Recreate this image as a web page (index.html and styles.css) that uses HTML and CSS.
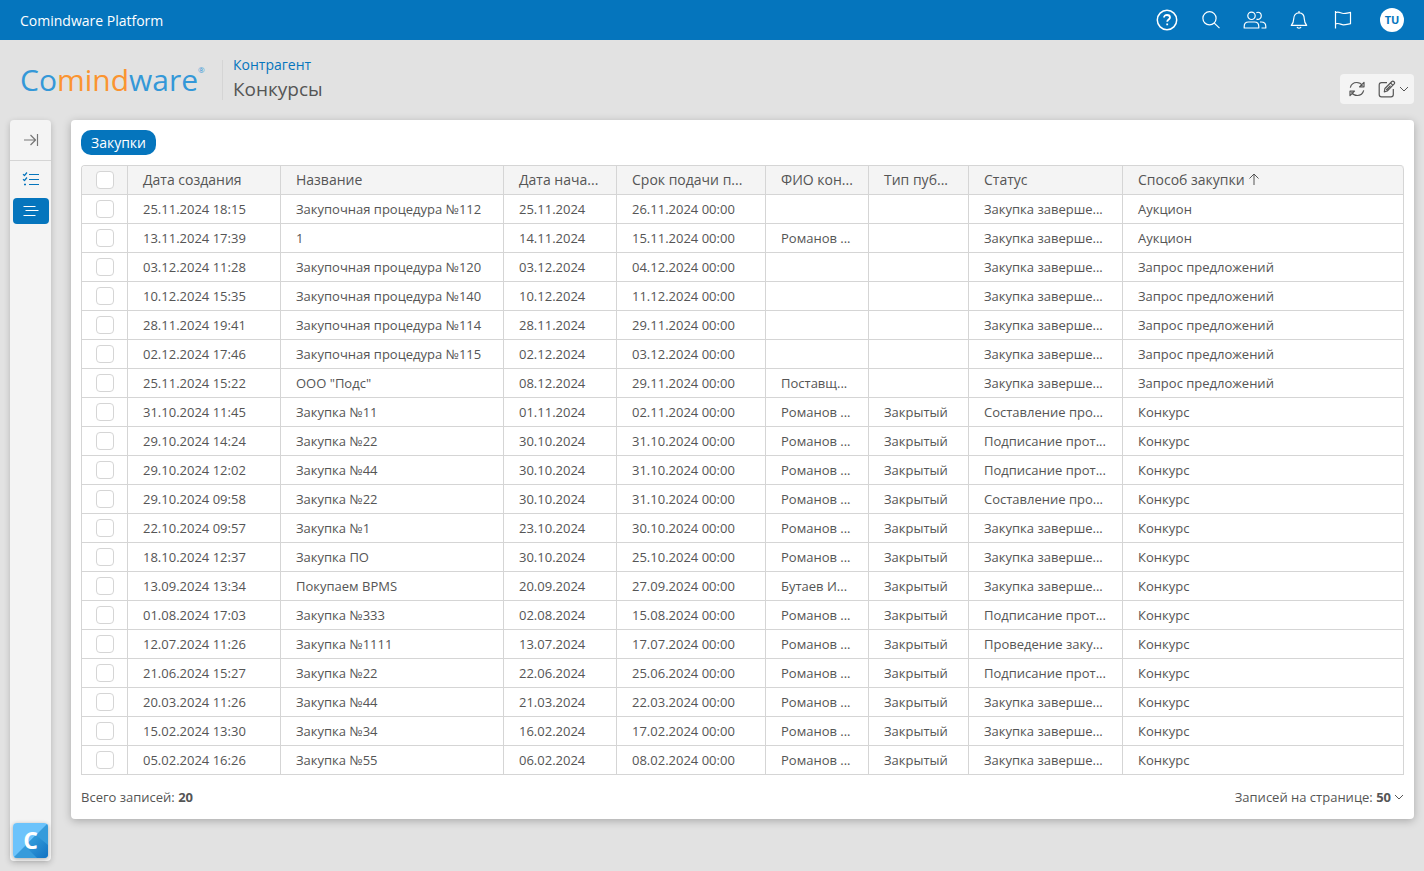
FILE: index.html
```html
<!DOCTYPE html>
<html lang="ru">
<head>
<meta charset="utf-8">
<title>Конкурсы — Comindware Platform</title>
<link rel="stylesheet" href="styles.css">
</head>
<body>
<header class="topbar">
  <span class="product">Comindware Platform</span>
  <nav class="tools">
    <button class="tool" type="button" aria-label="Справка"><svg width="22" height="22" viewBox="0 0 22 22"><circle cx="11" cy="11" r="9.7" stroke-width="1.5"/><path stroke-width="1.8" d="M8 8.6C8 6.9 9.3 6 11 6s3 .9 3 2.500c0 2-2.800 2.100-2.800 4.300M11.200 14.400v1.800"/></svg></button>
    <button class="tool" type="button" aria-label="Поиск"><svg width="22" height="22" viewBox="0 0 22 22"><circle cx="9.500" cy="9.300" r="6.600"/><path d="m14.300 14.100 5.200 5"/></svg></button>
    <button class="tool" type="button" aria-label="Пользователи"><svg width="24" height="22" viewBox="0 0 24 22"><circle cx="8.500" cy="6.800" r="3.700"/><path d="M1.200 19v-1.500c0-3 1.800-4.500 4.300-4.500h6c2.500 0 4.300 1.500 4.300 4.500V19zM13.300 3.700c2.800-1.300 5 .6 5 3.100s-2.200 4.300-4.800 3.300M17 13h1.200c2.700 0 4.600 1.500 4.600 4.500V19h-4.300"/></svg></button>
    <button class="tool" type="button" aria-label="Уведомления"><svg width="22" height="22" viewBox="0 0 22 22"><path d="M11 2v1.700M3.300 16.400c1.700-2 2.400-3.300 2.400-6.300 0-3.800 2-6.200 5.300-6.200s5.300 2.400 5.300 6.200c0 3 .7 4.300 2.400 6.300zM9 17.800c.5 1.800 3.500 1.800 4 0"/></svg></button>
    <button class="tool" type="button" aria-label="Задачи"><svg width="22" height="22" viewBox="0 0 22 22"><path d="M3.500 2v17.500M3.500 3.600c4-1.400 5 .9 8 .9 2.400 0 4.300-.6 7-1.100v11.300c-2.700.5-4.600 1.100-7 1.100-3 0-4-2.300-8-.9"/></svg></button>
    <button class="avatar" type="button">TU</button>
  </nav>
</header>

<section class="pagehead">
  <a class="logo" href="#" aria-label="Comindware"><span>Co</span><span class="logo-mid">mind</span><span>ware</span><sup>®</sup></a>
  <div class="titles">
    <a class="crumb" href="#">Контрагент</a>
    <h1 class="title">Конкурсы</h1>
  </div>
  <div class="actions">
    <button class="action" type="button" aria-label="Обновить"><svg width="18" height="18" viewBox="0 0 18 18"><path d="M2.300 7.600C3.200 4.300 5.600 2.500 8.700 2.500c2.500 0 4.500 1.100 5.900 3.200M16 2.300v4.500h-4.500zM15.700 10.400c-.9 3.300-3.300 5.100-6.400 5.100-2.500 0-4.500-1.100-5.900-3.200M2 15.700v-4.500h4.500z"/></svg></button>
    <button class="action edit" type="button" aria-label="Изменить"><svg width="18" height="18" viewBox="0 0 18 18"><path d="M9 2.700H3.500Q1.200 2.700 1.200 5v9.500q0 2.300 2.300 2.300h9.500q2.300 0 2.300-2.300V9M6.300 11.800l.6-3.300 7-7q1-.8 2.100.2t.2 2.200l-7 7.100zM12.500 2.900l2.500 2.500M8.200 10l4.300-4.300"/></svg><svg class="chevron" width="10" height="8" viewBox="0 0 10 8"><path d="m1 2 4 4 4-4"/></svg></button>
  </div>
</section>

<main class="workspace">
  <aside class="sidebar">
    <button class="expand" type="button" aria-label="Развернуть меню"><svg width="18" height="16" viewBox="0 0 18 16"><path d="M2 8h12M8.500 3 13.500 8l-5 5M15.500 2v12"/></svg></button>
    <button class="side-item" type="button" aria-label="Мои задачи"><svg width="18" height="16" viewBox="0 0 18 16"><path d="M7 3.500h10M7 8.500h10M7 13.500h10M1 3.200l1.500 1.300L5 1.500M1 8.200l1.500 1.300L5 6.500"/><path stroke-width="1.600" d="M2 13.500h2"/></svg></button>
    <button class="side-item active" type="button" aria-label="Конкурсы"><svg width="18" height="16" viewBox="0 0 18 16"><path d="M1.500 3.500h12M3.500 7.500h13M1.500 12.500h12"/></svg></button>
    <button class="brand" type="button" aria-label="Comindware"><svg width="35" height="35" viewBox="0 0 35 35"><defs><linearGradient id="shade" x1="0" y1="0" x2="1" y2="1"><stop offset=".3" stop-color="#2f97d8"/><stop offset="1" stop-color="#1272c2"/></linearGradient></defs><path fill="#6cc3fb" d="M0 0h35v35H0z"/><path fill="#369bdb" d="M35 0v35H0z"/><path fill="url(#shade)" d="m23 12 12 10v13H24L12 23z"/></svg><span class="brand-letter">C</span></button>
  </aside>

  <section class="panel">
    <button class="tab" type="button">Закупки</button>
    <table class="grid">
      <colgroup><col class="w-check"><col class="w-created"><col class="w-name"><col class="w-start"><col class="w-due"><col class="w-person"><col class="w-type"><col class="w-status"><col></colgroup>
      <thead>
        <tr><th><input type="checkbox" aria-label="Выбрать все"></th><th>Дата создания</th><th>Название</th><th>Дата нача...</th><th>Срок подачи п...</th><th>ФИО кон...</th><th>Тип пуб...</th><th>Статус</th><th>Способ закупки <svg class="sort" width="12" height="12" viewBox="0 0 12 12"><path d="M6 12V1M1.500 5.500 6 1l4.500 4.500"/></svg></th></tr>
      </thead>
      <tbody>
        <tr><td><input type="checkbox" aria-label="Выбрать"></td><td>25.11.2024 18:15</td><td>Закупочная процедура №112</td><td>25.11.2024</td><td>26.11.2024 00:00</td><td></td><td></td><td>Закупка заверше...</td><td>Аукцион</td></tr>
        <tr><td><input type="checkbox" aria-label="Выбрать"></td><td>13.11.2024 17:39</td><td>1</td><td>14.11.2024</td><td>15.11.2024 00:00</td><td>Романов ...</td><td></td><td>Закупка заверше...</td><td>Аукцион</td></tr>
        <tr><td><input type="checkbox" aria-label="Выбрать"></td><td>03.12.2024 11:28</td><td>Закупочная процедура №120</td><td>03.12.2024</td><td>04.12.2024 00:00</td><td></td><td></td><td>Закупка заверше...</td><td>Запрос предложений</td></tr>
        <tr><td><input type="checkbox" aria-label="Выбрать"></td><td>10.12.2024 15:35</td><td>Закупочная процедура №140</td><td>10.12.2024</td><td>11.12.2024 00:00</td><td></td><td></td><td>Закупка заверше...</td><td>Запрос предложений</td></tr>
        <tr><td><input type="checkbox" aria-label="Выбрать"></td><td>28.11.2024 19:41</td><td>Закупочная процедура №114</td><td>28.11.2024</td><td>29.11.2024 00:00</td><td></td><td></td><td>Закупка заверше...</td><td>Запрос предложений</td></tr>
        <tr><td><input type="checkbox" aria-label="Выбрать"></td><td>02.12.2024 17:46</td><td>Закупочная процедура №115</td><td>02.12.2024</td><td>03.12.2024 00:00</td><td></td><td></td><td>Закупка заверше...</td><td>Запрос предложений</td></tr>
        <tr><td><input type="checkbox" aria-label="Выбрать"></td><td>25.11.2024 15:22</td><td>ООО "Подс"</td><td>08.12.2024</td><td>29.11.2024 00:00</td><td>Поставщ...</td><td></td><td>Закупка заверше...</td><td>Запрос предложений</td></tr>
        <tr><td><input type="checkbox" aria-label="Выбрать"></td><td>31.10.2024 11:45</td><td>Закупка №11</td><td>01.11.2024</td><td>02.11.2024 00:00</td><td>Романов ...</td><td>Закрытый</td><td>Составление про...</td><td>Конкурс</td></tr>
        <tr><td><input type="checkbox" aria-label="Выбрать"></td><td>29.10.2024 14:24</td><td>Закупка №22</td><td>30.10.2024</td><td>31.10.2024 00:00</td><td>Романов ...</td><td>Закрытый</td><td>Подписание прот...</td><td>Конкурс</td></tr>
        <tr><td><input type="checkbox" aria-label="Выбрать"></td><td>29.10.2024 12:02</td><td>Закупка №44</td><td>30.10.2024</td><td>31.10.2024 00:00</td><td>Романов ...</td><td>Закрытый</td><td>Подписание прот...</td><td>Конкурс</td></tr>
        <tr><td><input type="checkbox" aria-label="Выбрать"></td><td>29.10.2024 09:58</td><td>Закупка №22</td><td>30.10.2024</td><td>31.10.2024 00:00</td><td>Романов ...</td><td>Закрытый</td><td>Составление про...</td><td>Конкурс</td></tr>
        <tr><td><input type="checkbox" aria-label="Выбрать"></td><td>22.10.2024 09:57</td><td>Закупка №1</td><td>23.10.2024</td><td>30.10.2024 00:00</td><td>Романов ...</td><td>Закрытый</td><td>Закупка заверше...</td><td>Конкурс</td></tr>
        <tr><td><input type="checkbox" aria-label="Выбрать"></td><td>18.10.2024 12:37</td><td>Закупка ПО</td><td>30.10.2024</td><td>25.10.2024 00:00</td><td>Романов ...</td><td>Закрытый</td><td>Закупка заверше...</td><td>Конкурс</td></tr>
        <tr><td><input type="checkbox" aria-label="Выбрать"></td><td>13.09.2024 13:34</td><td>Покупаем BPMS</td><td>20.09.2024</td><td>27.09.2024 00:00</td><td>Бутаев И...</td><td>Закрытый</td><td>Закупка заверше...</td><td>Конкурс</td></tr>
        <tr><td><input type="checkbox" aria-label="Выбрать"></td><td>01.08.2024 17:03</td><td>Закупка №333</td><td>02.08.2024</td><td>15.08.2024 00:00</td><td>Романов ...</td><td>Закрытый</td><td>Подписание прот...</td><td>Конкурс</td></tr>
        <tr><td><input type="checkbox" aria-label="Выбрать"></td><td>12.07.2024 11:26</td><td>Закупка №1111</td><td>13.07.2024</td><td>17.07.2024 00:00</td><td>Романов ...</td><td>Закрытый</td><td>Проведение заку...</td><td>Конкурс</td></tr>
        <tr><td><input type="checkbox" aria-label="Выбрать"></td><td>21.06.2024 15:27</td><td>Закупка №22</td><td>22.06.2024</td><td>25.06.2024 00:00</td><td>Романов ...</td><td>Закрытый</td><td>Подписание прот...</td><td>Конкурс</td></tr>
        <tr><td><input type="checkbox" aria-label="Выбрать"></td><td>20.03.2024 11:26</td><td>Закупка №44</td><td>21.03.2024</td><td>22.03.2024 00:00</td><td>Романов ...</td><td>Закрытый</td><td>Закупка заверше...</td><td>Конкурс</td></tr>
        <tr><td><input type="checkbox" aria-label="Выбрать"></td><td>15.02.2024 13:30</td><td>Закупка №34</td><td>16.02.2024</td><td>17.02.2024 00:00</td><td>Романов ...</td><td>Закрытый</td><td>Закупка заверше...</td><td>Конкурс</td></tr>
        <tr><td><input type="checkbox" aria-label="Выбрать"></td><td>05.02.2024 16:26</td><td>Закупка №55</td><td>06.02.2024</td><td>08.02.2024 00:00</td><td>Романов ...</td><td>Закрытый</td><td>Закупка заверше...</td><td>Конкурс</td></tr>
      </tbody>
    </table>
    <footer class="gridfoot">
      <span>Всего записей: <b>20</b></span>
      <button class="pagesize" type="button">Записей на странице: <b>50</b><svg class="chevron" width="10" height="8" viewBox="0 0 10 8"><path d="m1 2 4 4 4-4"/></svg></button>
    </footer>
  </section>
</main>
</body>
</html>
```

FILE: styles.css
```css
* { box-sizing: border-box; }

body {
  margin: 0;
  min-height: 100vh;
  display: flex;
  flex-direction: column;
  background: #e2e2e2;
  color: #555;
  font: 13px/20px "Open Sans", "Noto Sans", sans-serif;
}

button {
  margin: 0;
  padding: 0;
  border: 0;
  background: none;
  color: inherit;
  font: inherit;
  cursor: pointer;
}

a { text-decoration: none; }

svg {
  display: block;
  flex: none;
  fill: none;
  stroke: currentColor;
  stroke-width: 1.2;
  stroke-linejoin: round;
}

/* Top bar */
.topbar {
  height: 40px;
  padding: 0 20px;
  display: flex;
  align-items: center;
  justify-content: space-between;
  background: #0575bd;
  color: #fff;
}
.product { padding-top: 2px; font-size: 14px; }
.tools { display: flex; align-items: center; gap: 22px; }
.tool { width: 22px; display: flex; justify-content: center; }
.avatar {
  width: 24px;
  height: 24px;
  margin-left: 4px;
  border-radius: 50%;
  background: #fff;
  color: #0575bd;
  font-size: 11px;
  font-weight: 700;
}

/* Page heading */
.pagehead {
  height: 80px;
  padding: 0 10px 0 20px;
  display: flex;
  align-items: center;
}
.logo {
  width: 202px;
  display: flex;
  color: #3498d8;
  font-size: 30px;
  line-height: 40px;
}
.logo-mid { color: #fb9430; }
.logo sup { font-size: 8px; line-height: 20px; }
.titles {
  height: 40px;
  padding-left: 10px;
  border-left: 1px solid #d5d5d5;
  display: flex;
  flex-direction: column;
  justify-content: center;
}
.crumb { color: #0575bd; font-size: 14px; line-height: 20px; }
.title { margin: 0; padding-bottom: 2px; font-size: 19px; font-weight: 400; line-height: 28px; }
.actions {
  margin: 18px 0 0 auto;
  height: 30px;
  padding: 0 5px 0 8px;
  display: flex;
  align-items: center;
  gap: 12px;
  border-radius: 4px;
  background: #f4f4f4;
}
.action { display: flex; align-items: center; }
.edit { gap: 3px; }
.chevron, .sort { stroke-width: 1; }

/* Workspace */
.workspace {
  flex: 1;
  padding: 0 10px 10px;
  display: flex;
  gap: 20px;
}
.sidebar {
  width: 41px;
  padding-bottom: 3px;
  display: flex;
  flex-direction: column;
  align-items: center;
  border-radius: 4px;
  background: #f4f4f4;
  box-shadow: 0 2px 6px rgba(0, 0, 0, .2);
}
.expand {
  width: 100%;
  height: 41px;
  margin-bottom: 5px;
  display: grid;
  place-items: center;
  border-bottom: 1px solid #d5d5d5;
  color: #777;
}
.side-item {
  width: 36px;
  height: 26px;
  margin-bottom: 6px;
  display: grid;
  place-items: center;
  border-radius: 4px;
  color: #0575bd;
}
.side-item.active { background: #0575bd; color: #fff; }
.brand {
  margin-top: auto;
  display: grid;
  place-items: center;
  border-radius: 4px;
  overflow: hidden;
  box-shadow: 0 1px 4px rgba(0, 0, 0, .3);
}
.brand svg, .brand-letter { grid-area: 1 / 1; }
.brand svg { stroke: none; }
.brand-letter { z-index: 1; padding-bottom: 2px; color: #fff; font-size: 23px; font-weight: 700; }

.panel {
  flex: 1;
  min-width: 0;
  align-self: flex-start;
  padding: 10px 10px 12px;
  border-radius: 4px;
  background: #fff;
  box-shadow: 0 2px 8px rgba(0, 0, 0, .25);
}
.tab {
  height: 25px;
  margin-bottom: 10px;
  padding: 0 10px;
  display: block;
  border-radius: 10px;
  background: #0575bd;
  color: #fff;
  font-size: 14px;
}

/* Records table */
.grid {
  width: 100%;
  table-layout: fixed;
  border-collapse: separate;
  border-spacing: 0;
  border: solid #d5d5d5;
  border-width: 1px 0 0 1px;
  border-radius: 4px 4px 0 0;
}
.w-check { width: 46px; }
.w-created { width: 153px; }
.w-name { width: 223px; }
.w-start { width: 113px; }
.w-due { width: 149px; }
.w-person { width: 103px; }
.w-type { width: 100px; }
.w-status { width: 154px; }
.grid th, .grid td {
  height: 29px;
  padding: 0 5px 0 15px;
  border: solid #d5d5d5;
  border-width: 0 1px 1px 0;
  overflow: hidden;
  text-align: left;
  text-overflow: ellipsis;
  white-space: nowrap;
}
.grid th { background: #f4f4f4; font-size: 14px; font-weight: 400; }
.grid th:first-child { border-top-left-radius: 3px; }
.grid th:last-child { border-top-right-radius: 4px; }
.grid th:first-child, .grid td:first-child { padding: 0 0 0 14px; }
.grid input {
  appearance: none;
  display: block;
  width: 18px;
  height: 18px;
  margin: 0;
  border: 1px solid #d5d5d5;
  border-radius: 4px;
  background: #fff;
}
.sort { display: inline-block; }

.gridfoot {
  padding-top: 12px;
  display: flex;
  align-items: center;
  justify-content: space-between;
}
.pagesize { display: flex; align-items: center; white-space: pre; }
.pagesize svg { margin-left: 3px; }
```
